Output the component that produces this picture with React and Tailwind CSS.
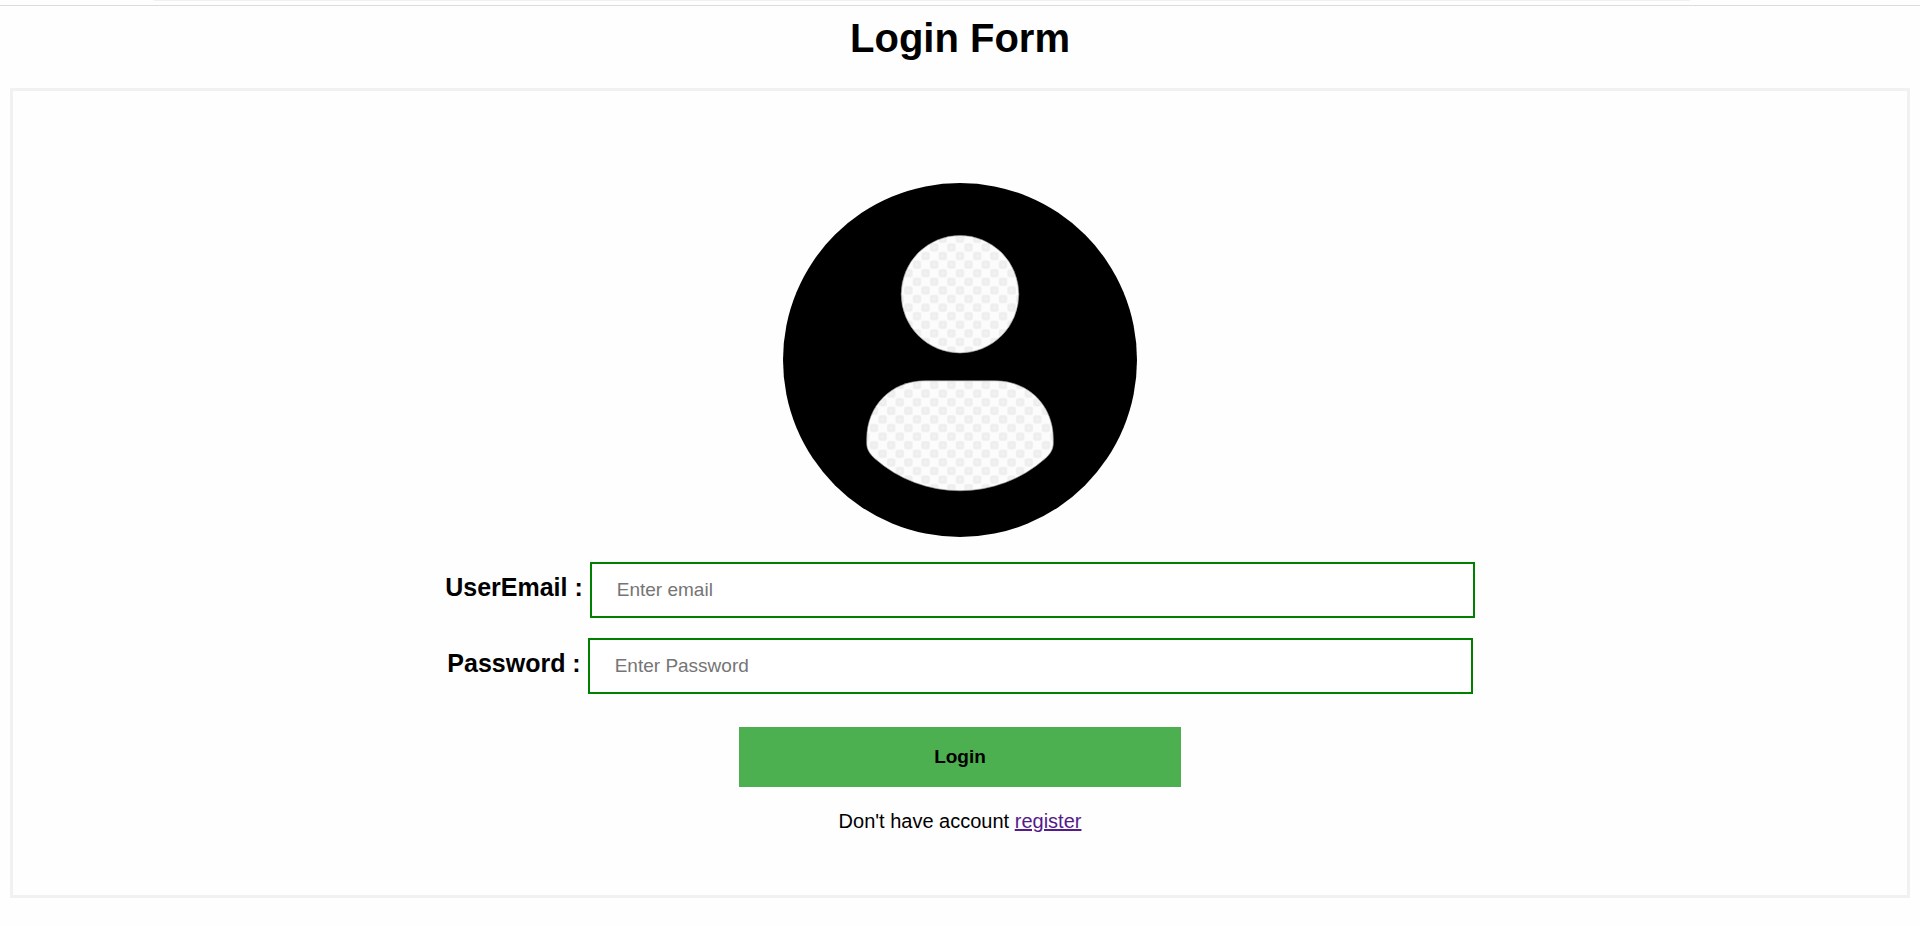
import React from "react";

function UserAvatar() {
  return (
    <svg
      className="w-[354px] h-[354px]"
      viewBox="0 0 354 354"
      role="img"
      aria-label="User"
    >
      <defs>
        <pattern
          id="checker"
          x="172.7"
          y="68.7"
          width="17.2"
          height="17.2"
          patternUnits="userSpaceOnUse"
        >
          <rect width="17.2" height="17.2" fill="#fcfcfc" />
          <rect x="0.2" y="0.2" width="8.2" height="8.2" rx="2" fill="#eeeeee" />
          <rect x="8.8" y="8.8" width="8.2" height="8.2" rx="2" fill="#eeeeee" />
          <circle cx="4.3" cy="4.3" r="1.6" fill="#f2f2f2" />
          <circle cx="12.9" cy="12.9" r="1.6" fill="#f2f2f2" />
        </pattern>
      </defs>
      <circle cx="177" cy="177" r="177" fill="#000" />
      <circle cx="177" cy="111.2" r="58.8" fill="url(#checker)" stroke="#999" strokeWidth="0.6" />
      <path
        d="M142 197.800H212C246 197.800 270.300 223 270.300 256V260C270.300 267 267 271 262 275.800A129 129 0 0 1 92 275.800C87 271 83.700 267 83.700 260V256C83.700 223 108 197.800 142 197.800Z"
        fill="url(#checker)"
        stroke="#999"
        strokeWidth="0.6"
      />
    </svg>
  );
}

function Field({ id, label, type, placeholder }) {
  return (
    <div className="flex w-full items-center justify-center gap-[7px]">
      <label htmlFor={id} className="pb-1.5 text-[25px] leading-7 font-bold whitespace-nowrap">
        {label}
      </label>
      <input
        id={id}
        type={type}
        placeholder={placeholder}
        className="h-14 w-1/2 border-2 border-[#008000] bg-white px-[25px] text-[19px] outline-none placeholder:text-[#757575]"
      />
    </div>
  );
}

export default function App() {
  return (
    <div className="min-h-screen bg-[#fefefe] font-['Liberation_Sans',Arial,sans-serif] text-black">
      <header className="border-b border-[#dcdcdc] pb-1">
        <div className="mr-[12%] ml-[8%] h-px bg-[#f1f1f1]" />
      </header>
      <main className="px-2.5 pt-[9px] pb-7">
        <h1 className="text-center text-[40px] leading-[46px] font-bold">Login Form</h1>
        <form
          className="mt-[27px] flex flex-col items-center border-3 border-[#f1f1f1] px-[62px] pt-[92px] pb-[62px]"
          onSubmit={(event) => event.preventDefault()}
        >
          <UserAvatar />
          <div className="mt-[25px] flex w-full flex-col gap-5">
            <Field id="email" label="UserEmail :" type="email" placeholder="Enter email" />
            <Field id="password" label="Password :" type="password" placeholder="Enter Password" />
          </div>
          <button
            type="submit"
            className="mt-[33px] h-[60px] w-1/4 cursor-pointer bg-[#4caf50] text-[19px] font-bold"
          >
            Login
          </button>
          <p className="mt-[23px] text-[20px] leading-[23px]">
            Don't have account{" "}
            <a href="#register" className="text-[#551a8b] underline">
              register
            </a>
          </p>
        </form>
      </main>
    </div>
  );
}
